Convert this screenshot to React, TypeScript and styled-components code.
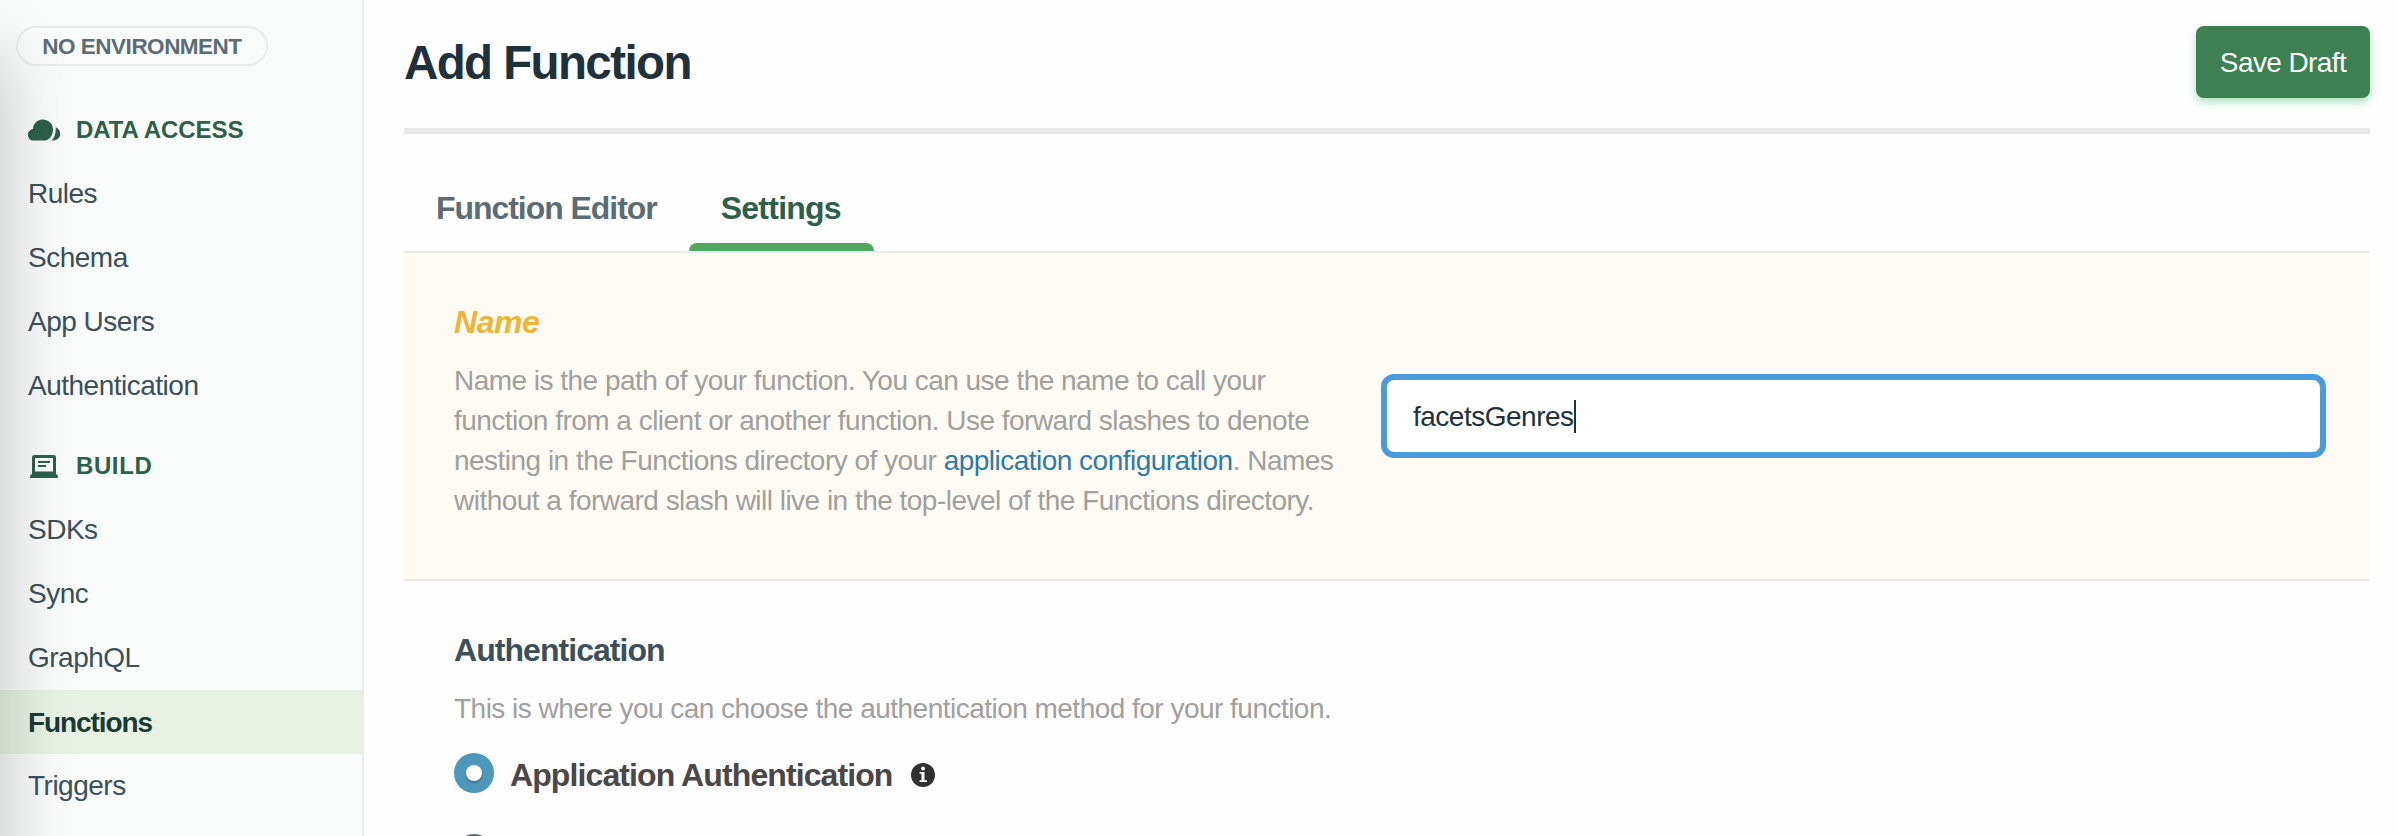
import React from "react";
import styled, { createGlobalStyle, css } from "styled-components";

const GlobalStyle = createGlobalStyle`
  *, *::before, *::after { box-sizing: border-box; }
  html, body { margin: 0; padding: 0; }
  body {
    background: #fefefe;
    font-family: "Liberation Sans", Arial, sans-serif;
    overflow: hidden;
  }
  h1, h2, p { margin: 0; }
`;

const Page = styled.div`
  display: flex;
  width: 100%;
  height: 836px;
  overflow: hidden;
`;

const Sidebar = styled.aside`
  position: relative;
  flex: 0 0 364px;
  height: 100%;
  padding-top: 26px;
  overflow: hidden;
  background: #f9fbfa;
  border-right: 2px solid #e8edeb;

  /* shade cast by the collapsed navigation drawer */
  &::before {
    content: "";
    position: absolute;
    top: 56px;
    bottom: -200px;
    left: -300px;
    width: 300px;
    box-shadow: 0 0 70px rgba(0, 0, 0, 0.23);
    pointer-events: none;
    z-index: 1;
  }
`;

const EnvironmentBadge = styled.div`
  display: flex;
  align-items: center;
  justify-content: center;
  width: 252px;
  height: 40px;
  margin: 0 0 32px 16px;
  padding-top: 1px;
  border: 2px solid #e8edeb;
  border-radius: 20px;
  color: #5d6c74;
  font-size: 22.5px;
  font-weight: 700;
  letter-spacing: -0.5px;
  line-height: 36px;
`;

const NavGroup = styled.nav`
  & + & {
    padding-top: 16px;
  }
`;

const NavHeading = styled.div<{ $tracking: number }>`
  display: flex;
  align-items: center;
  height: 64px;
  padding-left: 28px;
  color: #2d5f4b;
  font-size: 24px;
  font-weight: 700;
  letter-spacing: ${(p) => p.$tracking}px;

  svg {
    flex: none;
    margin-right: 15px;
  }
`;

const NavItem = styled.a<{ $active?: boolean }>`
  display: flex;
  align-items: center;
  height: 64px;
  padding-left: 28px;
  color: #3d4f58;
  font-size: 28px;
  letter-spacing: -0.5px;
  ${(p) =>
    p.$active &&
    css`
      padding-top: 1px;
      background: #e7f2e4;
      color: #1a3b35;
      font-weight: 700;
      letter-spacing: -1.1px;
    `}
`;

const Main = styled.main`
  flex: 1;
  min-width: 0;
  padding: 0 28px 0 40px;
`;

const Header = styled.header`
  display: flex;
  align-items: flex-start;
  justify-content: space-between;
  height: 134px;
  padding-top: 26px;
  border-bottom: 6px solid #e9e9ec;
`;

const Title = styled.h1`
  padding-top: 7px;
  color: #21313c;
  font-size: 47.5px;
  font-weight: 700;
  letter-spacing: -1.6px;
  line-height: 60px;
`;

const SaveButton = styled.button`
  width: 174px;
  height: 72px;
  padding: 2px 0 0;
  border: 0;
  border-radius: 8px;
  background: #3d8051;
  box-shadow: 0 4px 8px rgba(19, 170, 82, 0.35);
  color: #fff;
  font-family: inherit;
  font-size: 28px;
  letter-spacing: -0.6px;
`;

const Tabs = styled.div`
  display: flex;
  height: 119px;
  border-bottom: 2px solid #e8edeb;
`;

const Tab = styled.div<{ $active?: boolean }>`
  position: relative;
  padding: 55px 32px 0;
  color: ${(p) => (p.$active ? "#2d5f4b" : "#5d6c74")};
  font-size: 32px;
  font-weight: 700;
  letter-spacing: -1.05px;
  line-height: 38px;
  ${(p) =>
    p.$active &&
    css`
      padding-right: 33px;
      letter-spacing: -0.75px;
      &::after {
        content: "";
        position: absolute;
        left: 0;
        right: 0;
        bottom: 0;
        height: 8px;
        border-radius: 8px 8px 0 0;
        background: #52a85a;
      }
    `}
`;

const SettingsRow = styled.section<{ $changed?: boolean }>`
  display: flex;
  padding: 50px 44px 0 50px;
  ${(p) =>
    p.$changed &&
    css`
      height: 328px;
      background: #fefbf4;
      border-bottom: 2px solid #ebebed;
    `}
`;

const SettingsText = styled.div`
  flex: 0 0 927px;
`;

const SettingsTitle = styled.h2<{ $changed?: boolean }>`
  color: ${(p) => (p.$changed ? "#f0b435" : "#3d4f58")};
  font-size: 32px;
  font-weight: 700;
  font-style: ${(p) => (p.$changed ? "italic" : "normal")};
  letter-spacing: ${(p) => (p.$changed ? -0.45 : -0.95)}px;
  line-height: 38px;
`;

const Description = styled.p`
  margin-top: 20px;
  color: #a09f9e;
  font-size: 28px;
  letter-spacing: -0.52px;
  line-height: 40px;
  white-space: nowrap;
`;

const DocLink = styled.a`
  color: #2f7aa8;
`;

const NameField = styled.div`
  display: flex;
  align-items: center;
  flex: 1;
  height: 84px;
  margin-top: 71px;
  padding: 1px 0 0 26px;
  border: 6px solid #4a9ade;
  border-radius: 13px;
  background: #fff;
  color: #21313c;
  font-size: 28px;
  letter-spacing: -0.5px;
`;

const Caret = styled.span`
  width: 2px;
  height: 33px;
  background: #21313c;
`;

const RadioRow = styled.label`
  display: flex;
  align-items: center;
  height: 40px;
  margin-top: 24px;

  & + & {
    margin-top: 41px;
  }
`;

const Radio = styled.span<{ $checked?: boolean }>`
  display: flex;
  align-items: center;
  justify-content: center;
  flex: none;
  width: 40px;
  height: 40px;
  margin-right: 16px;
  border-radius: 50%;
  border: ${(p) => (p.$checked ? "0" : "4px solid #5d6c74")};
  background: ${(p) => (p.$checked ? "#4d97bb" : "#fff")};
`;

const RadioDot = styled.span`
  width: 16px;
  height: 16px;
  border-radius: 50%;
  background: #fff;
  box-shadow: 0 2px 2px rgba(6, 22, 33, 0.3);
`;

const RadioLabel = styled.span`
  padding-top: 4px;
  margin-right: 18px;
  color: #494747;
  font-size: 32px;
  font-weight: 700;
  letter-spacing: -0.9px;
  line-height: 38px;
`;

const InfoIcon = styled.svg`
  flex: none;
  margin-top: 4px;
`;

const CloudIcon = () => (
  <svg width="33" height="32" viewBox="0 0 33 32" fill="#2d5f4b">
    <path d="M14.8 5.6C19.9 5.6 25 9.4 25 15.5c0 6.3-3.9 11.1-9 11.1H5.7C2.5 26.6 0 24.1 0 20.9c0-3.1 2.1-5.500 4.900-5.900C5.300 9.600 9.500 5.600 14.800 5.600z" />
    <path d="M27.700 13.300c2.700 1 4.500 3.400 4.500 6.400 0 4.100-3.200 7-8.800 6.900 3-2.500 4.600-7 4.300-13.300z" />
  </svg>
);

const LaptopIcon = () => (
  <svg width="33" height="32" viewBox="0 0 33 32">
    <rect x="5.500" y="6.500" width="21" height="17" rx="1" fill="none" stroke="#2d5f4b" strokeWidth="3" />
    <path d="M4 21.500h24v2.500c1.200.5 2 1.300 2 2.400 0 1-.4 1.600-1.200 1.600H3.300C2.500 28 2 27.400 2 26.400c0-1.100.8-1.900 2-2.400z" fill="#2d5f4b" />
    <path d="M10 12h12M10 16h8" stroke="#2d5f4b" strokeWidth="2" />
  </svg>
);

const groups = [
  {
    name: "DATA ACCESS",
    tracking: -0.05,
    icon: <CloudIcon />,
    items: ["Rules", "Schema", "App Users", "Authentication"],
  },
  {
    name: "BUILD",
    tracking: 0.6,
    icon: <LaptopIcon />,
    items: ["SDKs", "Sync", "GraphQL", "Functions", "Triggers"],
  },
];

export default function App() {
  return (
    <>
      <GlobalStyle />
      <Page>
        <Sidebar>
          <EnvironmentBadge>NO ENVIRONMENT</EnvironmentBadge>
          {groups.map((group) => (
            <NavGroup key={group.name}>
              <NavHeading $tracking={group.tracking}>
                {group.icon}
                {group.name}
              </NavHeading>
              {group.items.map((item) => (
                <NavItem key={item} $active={item === "Functions"}>
                  {item}
                </NavItem>
              ))}
            </NavGroup>
          ))}
        </Sidebar>
        <Main>
          <Header>
            <Title>Add Function</Title>
            <SaveButton>Save Draft</SaveButton>
          </Header>
          <Tabs>
            <Tab>Function Editor</Tab>
            <Tab $active>Settings</Tab>
          </Tabs>
          <SettingsRow $changed>
            <SettingsText>
              <SettingsTitle $changed>Name</SettingsTitle>
              <Description>
                Name is the path of your function. You can use the name to call your
                <br />
                function from a client or another function. Use forward slashes to denote
                <br />
                nesting in the Functions directory of your <DocLink>application configuration</DocLink>. Names
                <br />
                without a forward slash will live in the top-level of the Functions directory.
              </Description>
            </SettingsText>
            <NameField>
              facetsGenres
              <Caret />
            </NameField>
          </SettingsRow>
          <SettingsRow>
            <SettingsText>
              <SettingsTitle>Authentication</SettingsTitle>
              <Description>
                This is where you can choose the authentication method for your function.
              </Description>
              <RadioRow>
                <Radio $checked>
                  <RadioDot />
                </Radio>
                <RadioLabel>Application Authentication</RadioLabel>
                <InfoIcon width="24" height="24" viewBox="0 0 24 24">
                  <circle cx="12" cy="12" r="12" fill="#303030" />
                  <circle cx="12" cy="5.500" r="2" fill="#fff" />
                  <path d="M8.500 9h5v8.200H16V19H8.500v-1.800h2v-6.400h-2z" fill="#fff" />
                </InfoIcon>
              </RadioRow>
              <RadioRow>
                <Radio />
              </RadioRow>
            </SettingsText>
          </SettingsRow>
        </Main>
      </Page>
    </>
  );
}
